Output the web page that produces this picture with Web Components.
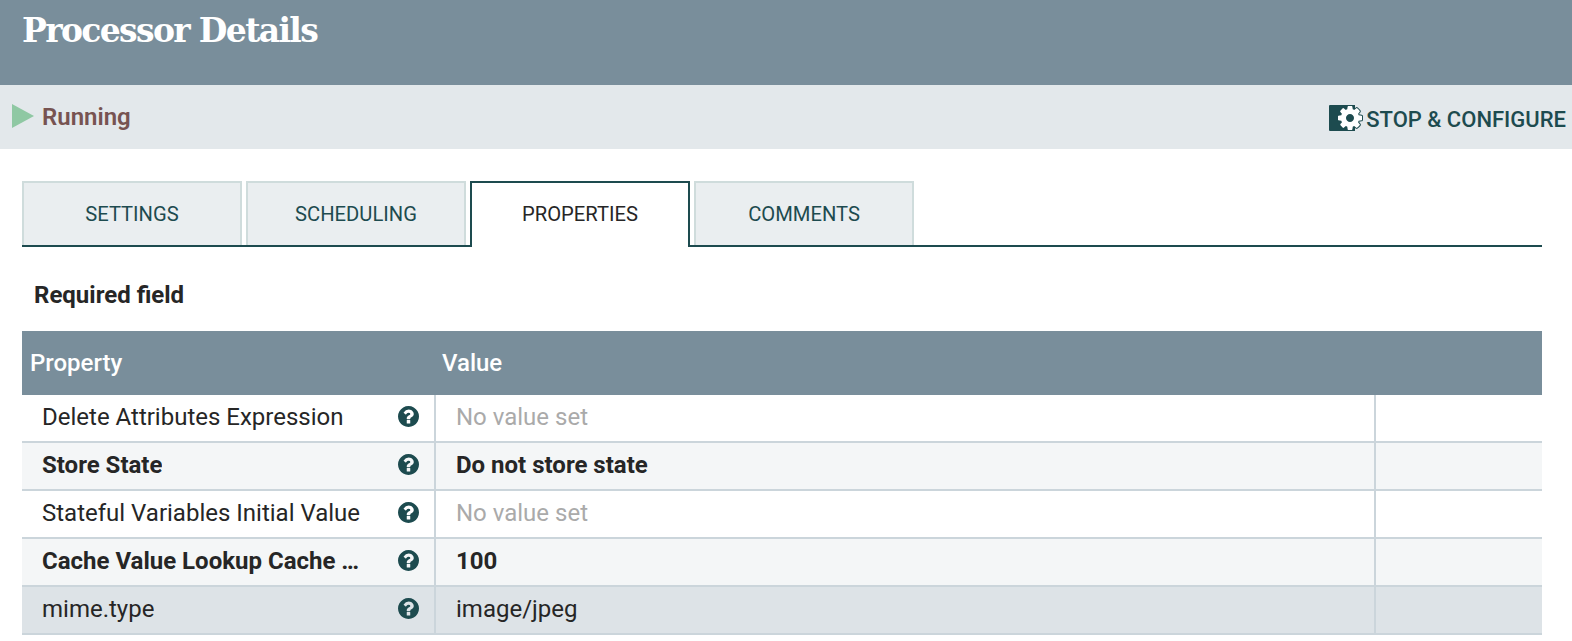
<!DOCTYPE html>
<html>
<head>
<meta charset="utf-8">
<style>
    html, body { margin: 0; padding: 0; background: #fff; font-family: Roboto, "Liberation Sans", sans-serif; }
</style>
</head>
<body>
<processor-details></processor-details>
<script>
const HELP_PATH = 'M1024 1376v-192q0-14-9-23t-23-9h-192q-14 0-23 9t-9 23v192q0 14 9 23t23 9h192q14 0 23-9t9-23zm256-672q0-88-55.5-163t-138.5-116-170-41q-243 0-371 213-15 24 8 44l132 100q7 6 19 6 16 0 25-12 53-68 86-92 34-24 86-24 48 0 85.5 26t37.5 59q0 38-20 61t-68 45q-63 28-115.5 86.5t-52.5 125.5v36q0 14 9 23t23 9h192q14 0 23-9t9-23q0-19 21.5-49.5t54.5-49.5q32-18 49-28.5t46-35 44.5-48 28-60.5 12.5-81zm384 192q0 209-103 385.5t-279.5 279.5-385.5 103-385.5-103-279.5-279.5-103-385.5 103-385.5 279.5-279.5 385.5-103 385.5 103 279.5 279.5 103 385.5z';
const COG_PATH = 'M1152 896q0-106-75-181t-181-75-181 75-75 181 75 181 181 75 181-75 75-181zm512-109v222q0 12-8 23t-20 13l-185 28q-19 54-39 91 35 50 107 138 10 12 10 25t-9 23q-27 37-99 108t-94 71q-12 0-26-9l-138-108q-44 23-91 38-16 136-29 186-7 28-36 28h-222q-14 0-24.5-8.5t-11.5-21.5l-28-184q-49-16-90-37l-141 107q-10 9-25 9-14 0-25-11-126-114-165-168-7-10-7-23 0-12 8-23 15-21 51-66.5t54-70.5q-27-50-41-99l-183-27q-13-2-21-12.5t-8-23.5v-222q0-12 8-23t19-13l186-28q14-46 39-92-40-57-107-138-10-12-10-24 0-10 9-23 26-36 98.5-107.5t94.5-71.5q13 0 26 10l138 107q44-23 91-38 16-136 29-186 7-28 36-28h222q14 0 24.5 8.5t11.5 21.5l28 184q49 16 90 37l142-107q9-9 24-9 13 0 25 10 129 119 165 170 7 8 7 22 0 12-8 23-15 21-51 66.5t-54 70.5q26 50 41 98l183 28q13 2 21 12.5t8 23.5z';

class TitleBar extends HTMLElement {
    constructor() {
        super();
        this.attachShadow({ mode: 'open' });
        this.shadowRoot.innerHTML = `
            <style>
                :host { display: block; height: 85px; background: #798e9b; color: #fff; box-sizing: border-box; padding: 9px 0 0 22px; }
                h1 { margin: 0; font: bold 33px/44px "DejaVu Serif", "Liberation Serif", serif; letter-spacing: -1.65px; }
            </style>
            <h1><slot></slot></h1>
        `;
    }
}

class StatusBar extends HTMLElement {
    constructor() {
        super();
        this.attachShadow({ mode: 'open' });
        this.shadowRoot.innerHTML = `
            <style>
                :host { display: flex; align-items: center; justify-content: space-between; height: 64px; background: #e3e8eb; padding: 0 6px 0 12px; }
                .state { display: flex; align-items: center; gap: 8px; color: #775351; font-size: 24px; font-weight: 600; }
                .play { width: 22px; height: 24px; margin-top: -3px; display: block; }
                .action { display: flex; align-items: center; gap: 2px; color: #1d4b4f; font-size: 22px; font-weight: 500; margin-top: 4px; }
                .cog { width: 36px; height: 28px; display: block; margin-top: -2px; }
            </style>
            <div class="state">
                <svg class="play" viewBox="0 0 22 24"><path d="M0 0L22 12L0 24Z" fill="#8fc8a3"/></svg>
                <span>Running</span>
            </div>
            <div class="action">
                <svg class="cog" viewBox="0 0 36 28">
                    <path d="M2 1H27V27H2a1 1 0 0 1-1-1V2a1 1 0 0 1 1-1Z" fill="#1d4b4f"/>
                    <svg x="8.44" y="0.44" width="27.125" height="27.125" viewBox="28 28 1736 1736">
                        <path fill="#1d4b4f" stroke="#1d4b4f" stroke-width="130" d="${COG_PATH}"/>
                        <path fill="#fff" fill-rule="evenodd" d="${COG_PATH}"/>
                    </svg>
                </svg>
                <span><slot name="action"></slot></span>
            </div>
        `;
    }
}

class TabBar extends HTMLElement {
    constructor() {
        super();
        this.attachShadow({ mode: 'open' });
        this.shadowRoot.innerHTML = `
            <style>
                :host { display: flex; gap: 4px; margin: 32px 30px 0 22px; border-bottom: 2px solid #1d4b4f; }
            </style>
            <slot></slot>
        `;
    }
}

class TabItem extends HTMLElement {
    constructor() {
        super();
        this.attachShadow({ mode: 'open' });
        this.shadowRoot.innerHTML = `
            <style>
                :host { display: flex; align-items: center; justify-content: center; box-sizing: border-box; width: 220px; height: 64px; background: #eaeef0; border: 2px solid #cfdcdc; border-bottom: 0; color: #1d4b4f; font-size: 20.2px; }
                :host([active]) { height: 66px; padding-bottom: 2px; margin-bottom: -2px; background: #fff; border-color: #1d4b4f; color: #262626; }
            </style>
            <slot></slot>
        `;
    }
}

class HelpIcon extends HTMLElement {
    constructor() {
        super();
        this.attachShadow({ mode: 'open' });
        this.shadowRoot.innerHTML = `
            <style>
                :host { display: block; width: 21px; height: 21px; flex: none; margin-top: -2px; }
                svg { display: block; width: 100%; height: 100%; }
            </style>
            <svg viewBox="128 128 1536 1536"><path fill="#1d4b4f" fill-rule="evenodd" d="${HELP_PATH}"/></svg>
        `;
    }
}

class PropertyTable extends HTMLElement {
    constructor() {
        super();
        this.attachShadow({ mode: 'open' });
        this.shadowRoot.innerHTML = `
            <style>
                :host { display: block; margin: 0 30px 0 22px; }
                .head { display: grid; grid-template-columns: 412px 1fr; height: 64px; align-items: center; background: #798e9b; color: #fff; font-size: 24px; font-weight: 500; }
                .head span { padding-left: 8px; }
            </style>
            <div class="head"><span>Property</span><span>Value</span></div>
            <slot></slot>
        `;
    }
}

class PropertyRow extends HTMLElement {
    constructor() {
        super();
        this.attachShadow({ mode: 'open' });
        this.shadowRoot.innerHTML = `
            <style>
                :host { display: grid; grid-template-columns: 412px 1fr 166px; box-sizing: border-box; height: 48px; border-bottom: 2px solid #cbd5db; color: #262626; font-size: 24px; background: #fff; }
                :host([required]) { background: #f4f6f7; font-weight: bold; }
                :host([selected]) { background: #dde3e7; }
                .cell { display: flex; align-items: center; min-width: 0; padding-bottom: 2px; border-right: 2px solid #cbd5db; box-sizing: border-box; }
                .name { justify-content: space-between; padding: 0 15px 2px 20px; border-right: 0; }
                .name span { overflow: hidden; white-space: nowrap; }
                .value { padding-left: 20px; border-left: 2px solid #cbd5db; }
                .extra { border-right: 0; }
                :host([empty]) .value { color: #aaa; font-weight: normal; }
            </style>
            <div class="cell name"><span><slot name="name"></slot></span><help-icon></help-icon></div>
            <div class="cell value"><slot name="value"></slot></div>
            <div class="cell extra"></div>
        `;
    }
}

class RequiredNote extends HTMLElement {
    constructor() {
        super();
        this.attachShadow({ mode: 'open' });
        this.shadowRoot.innerHTML = `
            <style>
                :host { display: flex; align-items: center; box-sizing: border-box; height: 84px; padding: 12px 0 0 34px; color: #262626; font-size: 24px; font-weight: bold; }
            </style>
            <slot></slot>
        `;
    }
}

class ProcessorDetails extends HTMLElement {
    constructor() {
        super();
        this.attachShadow({ mode: 'open' });
        const rows = [
            { name: 'Delete Attributes Expression', value: 'No value set', attrs: 'empty' },
            { name: 'Store State', value: 'Do not store state', attrs: 'required' },
            { name: 'Stateful Variables Initial Value', value: 'No value set', attrs: 'empty' },
            { name: 'Cache Value Lookup Cache …', value: '100', attrs: 'required' },
            { name: 'mime.type', value: 'image/jpeg', attrs: 'selected' }
        ];
        this.shadowRoot.innerHTML = `
            <style>
                :host { display: block; }
            </style>
            <title-bar>Processor Details</title-bar>
            <status-bar><span slot="action">STOP &amp; CONFIGURE</span></status-bar>
            <tab-bar>
                <tab-item>SETTINGS</tab-item>
                <tab-item>SCHEDULING</tab-item>
                <tab-item active>PROPERTIES</tab-item>
                <tab-item>COMMENTS</tab-item>
            </tab-bar>
            <required-note>Required field</required-note>
            <property-table>
                ${rows.map(r => `<property-row ${r.attrs}><span slot="name">${r.name}</span><span slot="value">${r.value}</span></property-row>`).join('')}
            </property-table>
        `;
    }
}

customElements.define('help-icon', HelpIcon);
customElements.define('title-bar', TitleBar);
customElements.define('status-bar', StatusBar);
customElements.define('tab-bar', TabBar);
customElements.define('tab-item', TabItem);
customElements.define('required-note', RequiredNote);
customElements.define('property-table', PropertyTable);
customElements.define('property-row', PropertyRow);
customElements.define('processor-details', ProcessorDetails);
</script>
</body>
</html>
